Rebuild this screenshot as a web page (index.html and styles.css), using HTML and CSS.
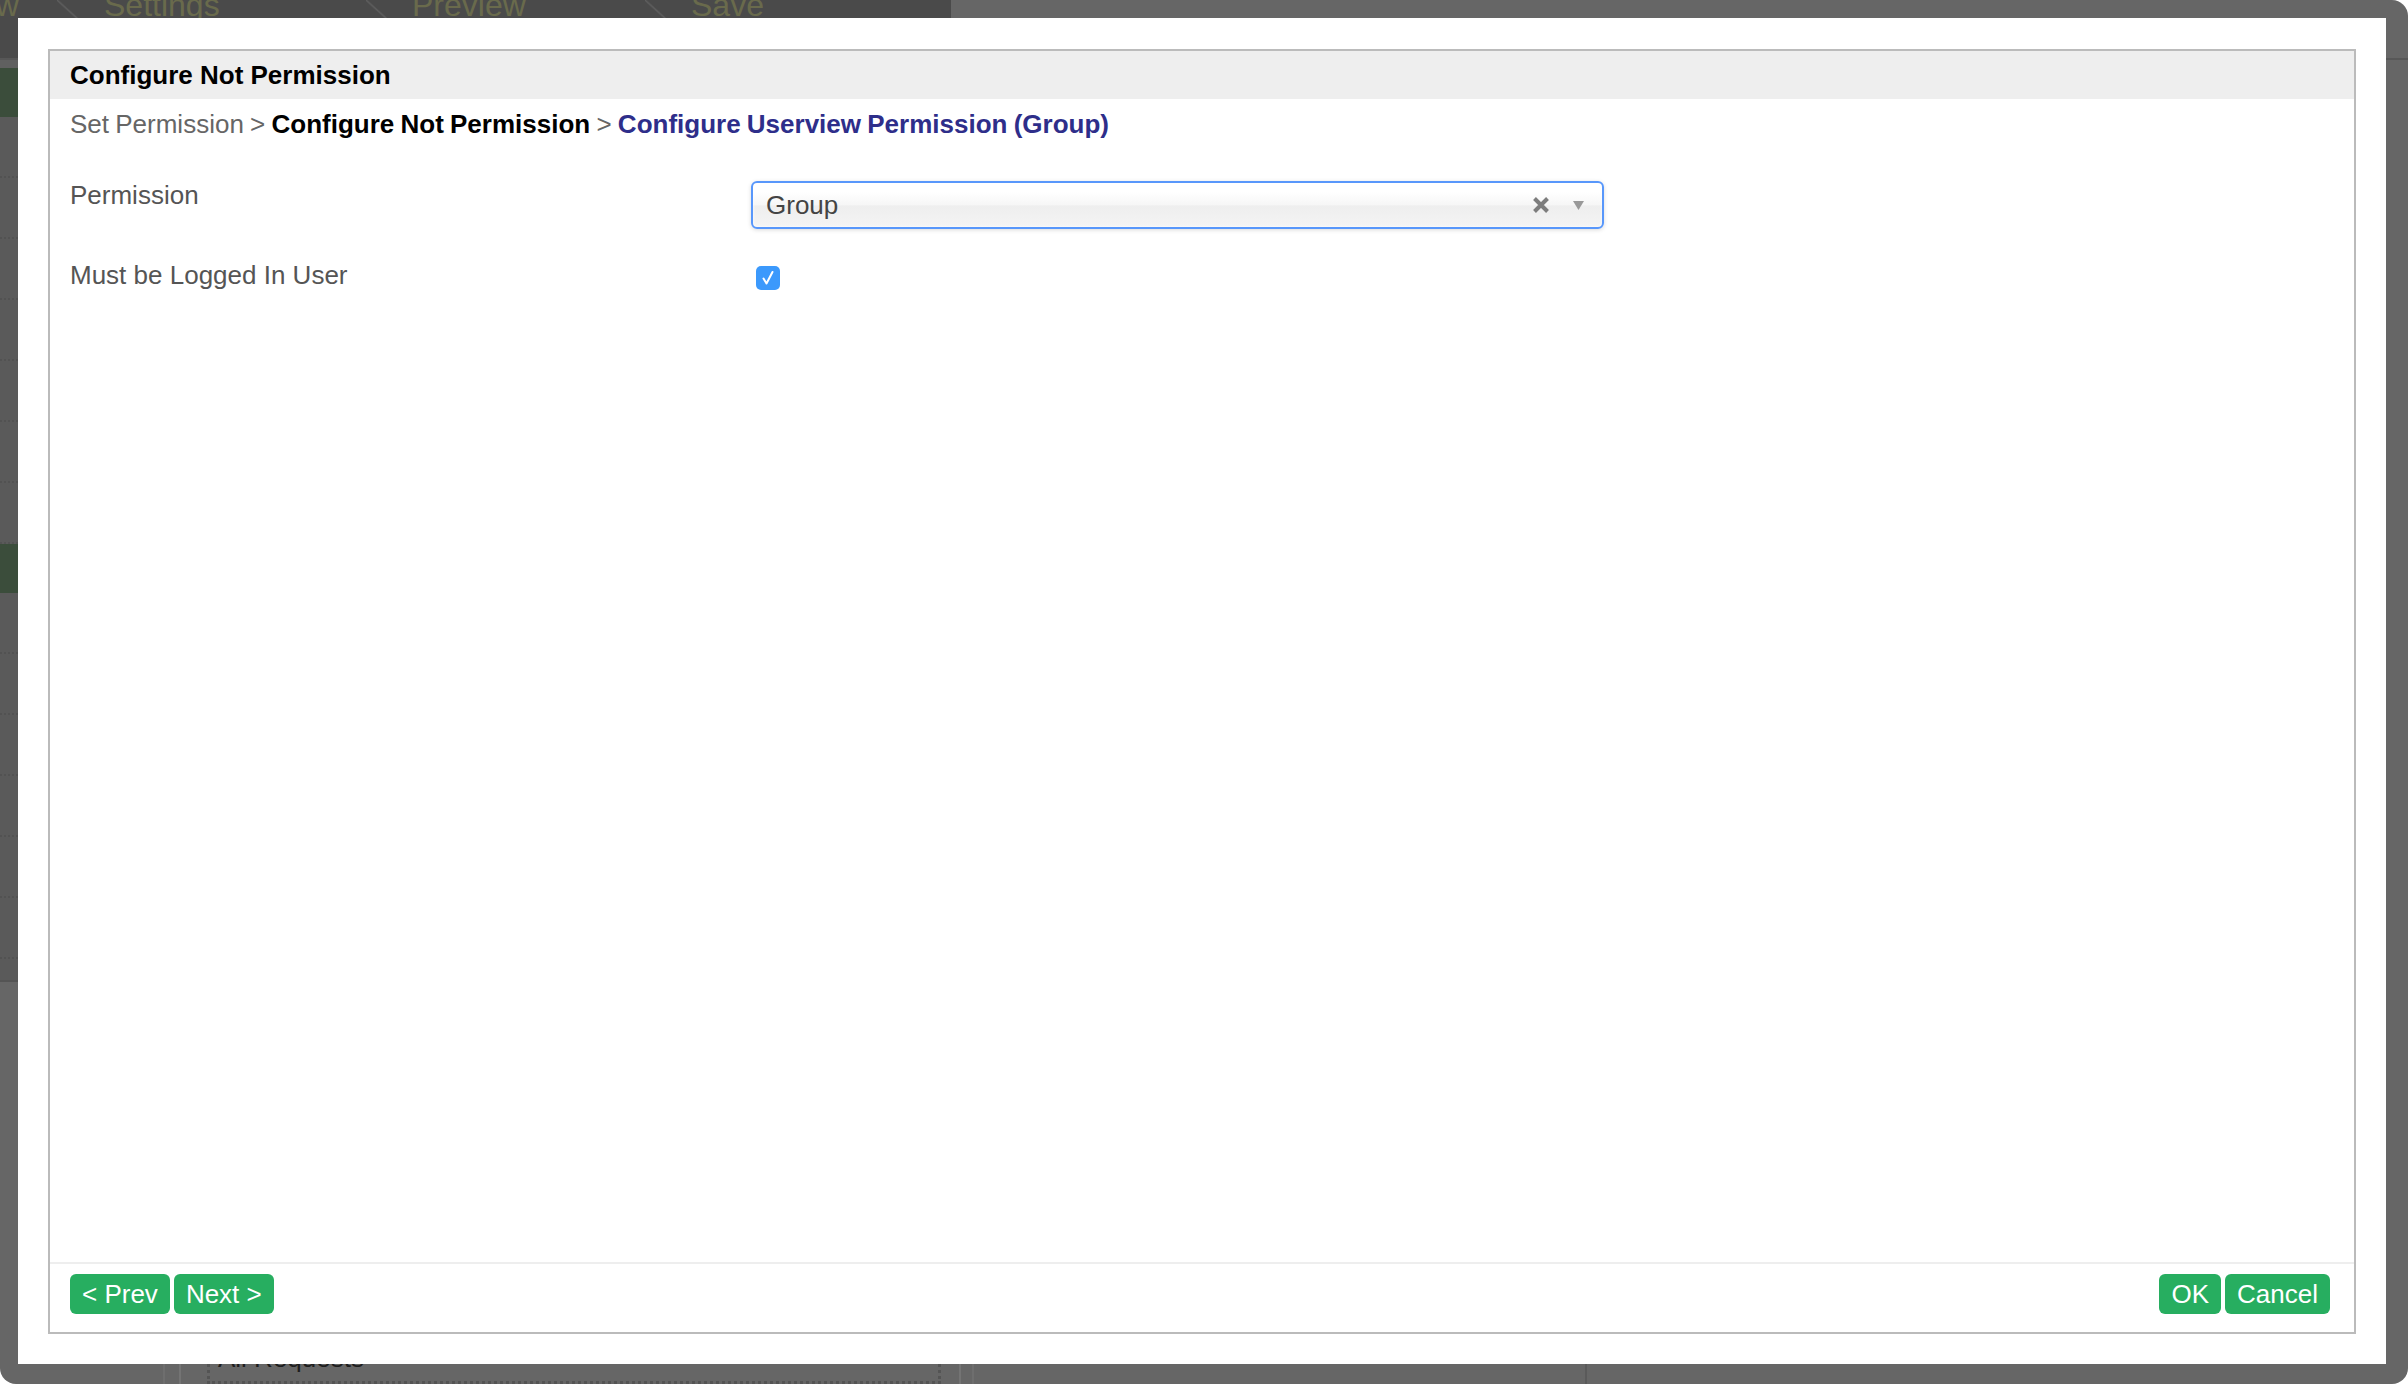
FILE: index.html
```html
<!DOCTYPE html>
<html lang="en">
<head>
    <meta charset="UTF-8">
    <title>Configure Not Permission</title>
    <link rel="stylesheet" href="styles.css">
</head>
<body>
    <div class="app">
        <!-- Builder behind the dialog -->
        <header class="topbar">
            <nav class="tabs">
                <span class="tab tab-first">View</span>
                <span class="tab tab-settings">Settings</span>
                <span class="tab tab-preview">Preview</span>
                <span class="tab">Save</span>
            </nav>
        </header>

        <div class="workspace">
            <aside class="sidebar">
                <div class="side-sep"></div>
                <div class="side-item active"></div>
                <div class="side-item"></div>
                <div class="side-item"></div>
                <div class="side-item"></div>
                <div class="side-item"></div>
                <div class="side-item"></div>
                <div class="side-item"></div>
                <div class="side-item"></div>
                <div class="side-item active"></div>
                <div class="side-item"></div>
                <div class="side-item"></div>
                <div class="side-item"></div>
                <div class="side-item"></div>
                <div class="side-item"></div>
                <div class="side-item"></div>
            </aside>

            <main class="canvas">
                <div class="list-col">
                    <div class="list-panel">
                        <div class="list-inner">
                            <div class="list-item">All Requests</div>
                        </div>
                    </div>
                </div>
                <div class="preview-col"></div>
                <div class="props-col"></div>
            </main>
        </div>

        <!-- Dialog -->
        <div class="dialog">
            <div class="panel">
                <div class="panel-header">Configure Not Permission</div>

                <div class="panel-body">
                    <div class="breadcrumb">
                        <span class="crumb">Set Permission</span>
                        <span class="crumb-sep">&gt;</span>
                        <span class="crumb crumb-current">Configure Not Permission</span>
                        <span class="crumb-sep">&gt;</span>
                        <span class="crumb crumb-next">Configure Userview Permission (Group)</span>
                    </div>

                    <div class="field-row field-permission">
                        <div class="field-label">Permission</div>
                        <div class="select">
                            <span class="select-value">Group</span>
                            <svg class="select-clear" width="18" height="18" viewBox="0 0 18 18">
                                <path d="M2.5 2.5 L15.5 15.5 M15.5 2.5 L2.5 15.5" stroke="#7d7d7d" stroke-width="4" fill="none"/>
                            </svg>
                            <svg class="select-arrow" width="11" height="10" viewBox="0 0 11 10">
                                <polygon points="0,1 11,1 5.5,10" fill="#999"/>
                            </svg>
                        </div>
                    </div>

                    <div class="field-row field-logged">
                        <div class="field-label">Must be Logged In User</div>
                        <span class="checkbox">
                            <svg width="24" height="24" viewBox="0 0 24 24">
                                <path d="M7.5 12.5 L10.5 17.5 L16.5 6" stroke="#fff" stroke-width="2" fill="none" stroke-linecap="round" stroke-linejoin="round"/>
                            </svg>
                        </span>
                    </div>
                </div>

                <div class="panel-footer">
                    <div class="btn-group">
                        <button class="btn">&lt; Prev</button>
                        <button class="btn">Next &gt;</button>
                    </div>
                    <div class="btn-group">
                        <button class="btn">OK</button>
                        <button class="btn">Cancel</button>
                    </div>
                </div>
            </div>
        </div>
    </div>
</body>
</html>
```

FILE: styles.css
```css
/* Page */
:root {
    --green: #27ae60;
    --panel-border: #bbb;
    --muted: #555;
}

body {
    margin: 0;
    background: #fff;
    font-family: 'Liberation Sans', Arial, Helvetica, sans-serif;
}

.app {
    position: relative;
    width: 2408px;
    height: 1384px;
    background: #666;
    border-radius: 0 16px 16px 16px;
    overflow: hidden;
}

/* Builder behind the overlay */
.topbar {
    display: flex;
    height: 58px;
    border-bottom: 2px solid #575757;
}

.tabs {
    display: flex;
    align-items: flex-start;
    width: 951px;
    background-color: #4a4a4a;
    background-image:
        linear-gradient(to top right, transparent calc(50% - 1.5px), #5e5e5e 50%, transparent calc(50% + 1.5px)),
        linear-gradient(to top right, transparent calc(50% - 1.5px), #5e5e5e 50%, transparent calc(50% + 1.5px)),
        linear-gradient(to top right, transparent calc(50% - 1.5px), #5e5e5e 50%, transparent calc(50% + 1.5px));
    background-size: 64px 58px;
    background-position: 57px 0, 366px 0, 645px 0;
    background-repeat: no-repeat;
    overflow: hidden;
}

.tab {
    font-size: 32px;
    line-height: 32px;
    margin-top: -11px;
    padding-left: 37px;
    color: #696a4c;
    white-space: nowrap;
}

.tab-first {
    padding-left: 0;
    margin-left: -50px;
    width: 117px;
}

.tab-settings {
    width: 271px;
}

.tab-preview {
    width: 242px;
}

.workspace {
    display: flex;
    height: 1324px;
}

.sidebar {
    align-self: flex-start;
    width: 150px;
    padding-bottom: 21px;
    background: #5a5a5a;
    border-bottom: 2px solid #545454;
}

.side-sep {
    height: 8px;
    background: #606060;
}

.side-item {
    height: 59px;
    border-bottom: 2px dotted #525252;
}

.side-item.active {
    height: 49px;
    border-bottom: none;
    background: #3b4d3b;
}

.canvas {
    flex: 1;
    display: flex;
}

.list-col {
    width: 811px;
    padding-left: 13px;
    display: flex;
}

.list-panel {
    flex: 1;
    display: flex;
    padding: 0 11px 0 14px;
    border-left: 2px solid #6e6e6e;
    border-right: 2px solid #6e6e6e;
}

.list-inner {
    flex: 1;
    display: flex;
    flex-direction: column;
    justify-content: flex-end;
    padding: 0 18px 0 26px;
    border-left: 2px solid #747474;
    border-right: 2px solid #747474;
}

.list-item {
    padding: 8px 8px 8px 8px;
    border: 3px dotted #545454;
    border-top: none;
    font-size: 26px;
    line-height: 30px;
    color: #1e1e1e;
}

.preview-col {
    width: 611px;
}

.props-col {
    flex: 1;
    border-left: 2px solid #5a5a5a;
}

/* Dialog */
.dialog {
    position: absolute;
    top: 18px;
    left: 18px;
    width: 2368px;
    height: 1346px;
    box-sizing: border-box;
    padding: 31px 30px 30px 30px;
    background: #fff;
}

.panel {
    height: 100%;
    box-sizing: border-box;
    display: flex;
    flex-direction: column;
    border: 2px solid var(--panel-border);
}

.panel-header {
    height: 48px;
    display: flex;
    align-items: center;
    padding: 0 20px;
    background: #eee;
    font-size: 26px;
    font-weight: bold;
    color: #000;
}

.panel-body {
    flex: 1;
    padding: 0 20px;
}

.breadcrumb {
    margin-top: 10px;
    font-size: 26px;
    line-height: 30px;
    color: #666;
    white-space: nowrap;
    word-spacing: -1px;
}

.crumb-current {
    font-weight: bold;
    color: #000;
}

.crumb-next {
    font-weight: bold;
    color: #2e2e8a;
}

.field-row {
    display: flex;
    align-items: flex-start;
}

.field-permission {
    margin-top: 41px;
}

.field-logged {
    margin-top: 31px;
}

.field-label {
    width: 681px;
    font-size: 26px;
    line-height: 30px;
    color: var(--muted);
}

/* Chosen style select */
.select {
    margin-top: 1px;
    width: 853px;
    height: 48px;
    box-sizing: border-box;
    display: flex;
    align-items: center;
    padding: 0 18px 0 13px;
    border: 2px solid #5897fb;
    border-radius: 6px;
    background: linear-gradient(#fff 20%, #f6f6f6 50%, #eee 52%, #f4f4f4 100%);
    box-shadow: 0 0 3px #fff inset, 0 1px 4px rgba(0, 0, 0, 0.15);
}

.select-value {
    flex: 1;
    font-size: 26px;
    color: #444;
}

.select-clear {
    margin-right: 23px;
}

.checkbox {
    margin: 6px 0 0 5px;
    width: 24px;
    height: 24px;
    border-radius: 5px;
    background: #3b99fc;
    display: flex;
}

/* Footer buttons */
.panel-footer {
    display: flex;
    justify-content: space-between;
    padding: 10px 24px 18px 20px;
    border-top: 2px solid #eee;
}

.btn-group {
    display: flex;
    gap: 4px;
}

.btn {
    height: 40px;
    padding: 0 12px;
    border: none;
    border-radius: 6px;
    background: var(--green);
    color: #fff;
    font-family: inherit;
    font-size: 26px;
    line-height: 40px;
    cursor: pointer;
}
```
